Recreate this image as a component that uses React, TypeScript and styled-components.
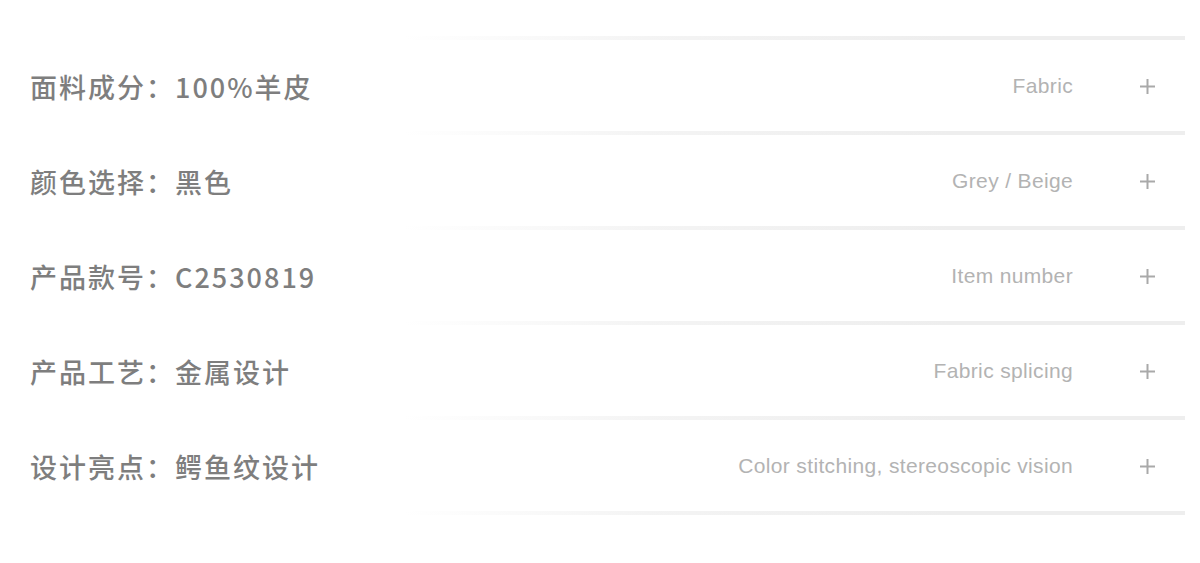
import React from 'react';
import styled, { createGlobalStyle } from 'styled-components';

const GlobalStyle = createGlobalStyle`
  html, body {
    margin: 0;
    padding: 0;
    background: #ffffff;
  }
`;

const List = styled.div`
  width: 1200px;
  height: 563px;
  padding-top: 36px;
  box-sizing: border-box;
  background: #ffffff;
`;

// soft line that fades in from the left
const Divider = styled.div`
  height: 4px;
  margin-right: 15px;
  background: linear-gradient(
    to right,
    rgba(239, 239, 239, 0) 0%,
    rgba(239, 239, 239, 0) 34%,
    rgba(239, 239, 239, 0.7) 55%,
    #eeeeee 80%,
    #eeeeee 100%
  );
`;

const Row = styled.div`
  height: 91px;
  display: flex;
  align-items: center;
  padding: 1px 44px 0 30px;
  box-sizing: border-box;
`;

const Label = styled.div`
  font-family: 'Noto Sans CJK SC', 'Noto Sans', sans-serif;
  font-size: 27px;
  font-weight: 500;
  letter-spacing: 2px;
  color: #7e7e7e;
  white-space: nowrap;
`;

const Value = styled.div`
  margin-left: auto;
  font-family: 'Liberation Sans', Arial, sans-serif;
  font-size: 21px;
  letter-spacing: 0.35px;
  color: #b3b3b3;
  white-space: nowrap;
`;

const Plus = styled.svg`
  width: 17px;
  height: 17px;
  margin-left: 66px;
  flex-shrink: 0;
`;

interface Spec {
  label: string;
  value: string;
  en: string;
}

const specs: Spec[] = [
  { label: '面料成分', value: '100%羊皮', en: 'Fabric' },
  { label: '颜色选择', value: '黑色', en: 'Grey / Beige' },
  { label: '产品款号', value: 'C2530819', en: 'Item number' },
  { label: '产品工艺', value: '金属设计', en: 'Fabric splicing' },
  { label: '设计亮点', value: '鳄鱼纹设计', en: 'Color stitching, stereoscopic vision' },
];

const PlusIcon = () => (
  <Plus viewBox="0 0 17 17">
    <path d="M8.5 1v15M1 8.5h15" stroke="#a9a9a9" strokeWidth="2" fill="none" />
  </Plus>
);

export default function App() {
  return (
    <>
      <GlobalStyle />
      <List>
        {specs.map((s) => (
          <React.Fragment key={s.label}>
            <Divider />
            <Row>
              <Label>
                {s.label}：{s.value}
              </Label>
              <Value>{s.en}</Value>
              <PlusIcon />
            </Row>
          </React.Fragment>
        ))}
        <Divider />
      </List>
    </>
  );
}
